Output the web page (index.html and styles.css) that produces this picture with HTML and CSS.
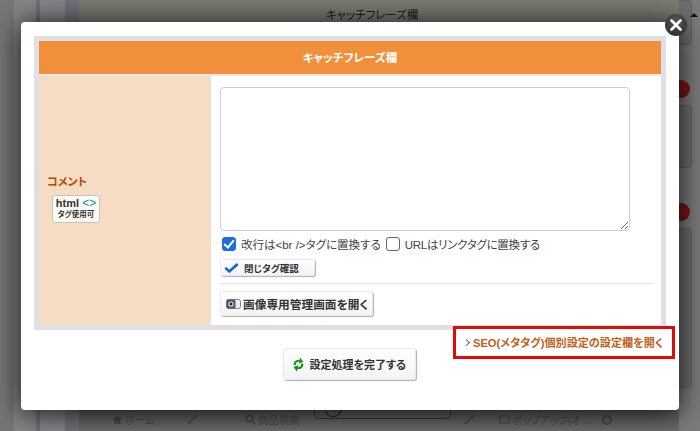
FILE: index.html
```html
<!DOCTYPE html>
<html lang="ja">
  <head>
    <meta charset="UTF-8" />
    <title>キャッチフレーズ欄</title>
    <link rel="stylesheet" href="styles.css">
  </head>
  <body>
    <!-- page behind the overlay -->
    <div class="backdrop">
      <div class="bd-side"></div>
      <div class="bd-main">
        <div class="bd-title">
          <span>キャッチフレーズ欄</span>
          <i class="bd-caret"></i>
        </div>
        <div class="bd-foot">
          <div class="bd-item bd-home">
            <svg width="11" height="10" viewBox="0 0 11 10"><path d="M5.500 1L1 5h1.500v4h2.200V6.500h1.600V9h2.200V5H10z" fill="#444"/></svg>
            <span>ホーム</span>
          </div>
          <svg class="bd-pen" width="11" height="11" viewBox="0 0 11 11"><path d="M1 10L10 1" stroke="#444" stroke-width="1.500"/></svg>
          <div class="bd-item bd-search">
            <svg width="11" height="11" viewBox="0 0 11 11"><circle cx="4.500" cy="4.500" r="3.200" fill="none" stroke="#444" stroke-width="1.300"/><path d="M7 7l3 3" stroke="#444" stroke-width="1.500"/></svg>
            <span>商品検索</span>
          </div>
          <div class="bd-pill"><i></i></div>
          <svg class="bd-pen bd-pen-b" width="11" height="11" viewBox="0 0 11 11"><path d="M1 10L10 1" stroke="#444" stroke-width="1.500"/></svg>
          <div class="bd-item bd-popup">
            <svg width="11" height="9" viewBox="0 0 11 9"><rect x="1" y="1" width="9" height="7" fill="none" stroke="#444"/></svg>
            <span>ポップアップ(オ...</span>
            <i class="bd-gear"></i>
          </div>
        </div>
      </div>
      <div class="bd-right">
        <div class="bd-box bd-box-a"></div>
        <i class="bd-badge"></i>
        <div class="bd-box bd-box-b"></div>
        <i class="bd-badge"></i>
        <div class="bd-box bd-box-c"></div>
      </div>
    </div>

    <div class="modal">
      <a class="close" href="#">
        <svg width="14" height="14" viewBox="0 0 14 14"><path d="M2.500 2.500l9 9M11.500 2.500l-9 9" stroke="#fff" stroke-width="2.600" stroke-linecap="round"/></svg>
      </a>

      <div class="frame">
        <div class="frame-head">キャッチフレーズ欄</div>
        <div class="frame-row">
          <div class="label-cell">
            <div class="label-text">コメント</div>
            <div class="tag-badge">
              <div class="tag-top">html <b>&lt;&gt;</b></div>
              <div class="tag-sub">タグ使用可</div>
            </div>
          </div>
          <div class="field-cell">
            <textarea class="comment"></textarea>
            <div class="checks">
              <label class="check"><input type="checkbox" checked />改行は&lt;br /&gt;タグに置換する</label>
              <label class="check check-url"><input type="checkbox" />URLはリンクタグに置換する</label>
            </div>
            <button class="btn btn-tag">
              <svg width="15" height="11" viewBox="0 0 17 12"><path d="M1.500 6.500l4.500 4L15.500 2" fill="none" stroke="#0b5fd8" stroke-width="2.800"/></svg>
              <span>閉じタグ確認</span>
            </button>
            <div class="sep"></div>
            <button class="btn btn-image">
              <svg width="15" height="10" viewBox="0 0 15 10"><rect x=".5" y=".5" width="14" height="9" rx="2" fill="#eee" stroke="#888"/><rect x=".5" y=".5" width="9" height="9" rx="2" fill="#555"/><circle cx="5" cy="5" r="2.600" fill="#fff"/><circle cx="5" cy="5" r="1.700" fill="#123a80"/></svg>
              <span>画像専用管理画面を開く</span>
            </button>
          </div>
        </div>
      </div>

      <div class="seo-link"><i class="chev"></i>SEO(メタタグ)個別設定の設定欄を開く</div>

      <div class="actions">
        <button class="btn btn-done">
          <svg width="13" height="15" viewBox="0 0 15 17"><path d="M2 9.500C1.500 5.500 4.500 3 8.500 3.500L9.500 .5l3.500 5-5.500 2 .8-2C6 5 4 6.500 4.500 9.500z" fill="#1a9a1a"/><path d="M13 7.500c.5 4-2.500 6.500-6.500 6L5.500 16.500 2 11.500l5.500-2-.8 2C9 12 11 10.500 10.500 7.500z" fill="#0e8a0e"/></svg>
          <span>設定処理を完了する</span>
        </button>
      </div>
    </div>
  </body>
</html>
```

FILE: styles.css
```css
html, body {
  margin: 0;
  height: 431px;
  overflow: hidden;
}
body {
  font-family: "Liberation Sans", "Noto Sans CJK JP", sans-serif;
  font-feature-settings: "palt";
  background: #6f6f6f;
}

/* page behind the overlay */
.backdrop {
  position: absolute;
  inset: 0;
  display: flex;
}
.bd-side {
  width: 79px;
  background: linear-gradient(90deg, #777 0, #777 14px, #868688 14px, #868688 36px, #707076 36px, #707076 40px, #86868c 40px, #86868c 65px, #72727a 65px, #72727a 79px);
}
.bd-main {
  flex: 1;
  display: flex;
  flex-direction: column;
  justify-content: space-between;
  background: #7d7c72;
}
.bd-title {
  height: 22px;
  display: flex;
  justify-content: center;
  padding: 6px 14px 0 0;
  box-sizing: border-box;
  font-size: 11.5px;
  color: #1c1c1c;
  position: relative;
}
.bd-caret {
  position: absolute;
  right: -19px;
  top: 13px;
  border: 4px solid transparent;
  border-top: 0;
  border-bottom: 4px solid #111;
}
.bd-foot {
  height: 21px;
  display: flex;
  align-items: flex-start;
  background: linear-gradient(#5c5c5c, #6e6e6e);
  padding-left: 33px;
  box-sizing: border-box;
  font-size: 10.5px;
  color: #4a4a4a;
}
.bd-item {
  display: flex;
  align-items: center;
  gap: 2px;
  margin-top: 2px;
  white-space: nowrap;
}
.bd-pen {
  margin: 4px 0 0 32px;
}
.bd-pen-b {
  margin-left: 13px;
}
.bd-search {
  margin-left: 47px;
}
.bd-pill {
  width: 137px;
  height: 9px;
  margin-left: 14px;
  box-sizing: border-box;
  border: 1px solid #333;
  border-top: 0;
  border-radius: 0 0 5px 5px;
}
.bd-pill i {
  display: block;
  width: 14px;
  height: 6px;
  margin-left: 10px;
  border: 1.5px solid #222;
  border-top: 0;
  border-radius: 0 0 8px 8px;
}
.bd-popup {
  margin-left: 24px;
}
.bd-gear {
  width: 6px;
  height: 6px;
  margin-left: 10px;
  border: 2px solid #4a4a4a;
  border-radius: 50%;
}
.bd-right {
  width: 21px;
  background: #7c7c7c;
  display: flex;
  flex-direction: column;
}
.bd-box {
  width: 13px;
  box-sizing: border-box;
  background: rgba(0, 0, 0, 0.1);
  border: 1px solid rgba(0, 0, 0, 0.12);
  border-left: 0;
  border-radius: 0 4px 4px 0;
}
.bd-box-a {
  height: 45px;
}
.bd-box-b {
  height: 63px;
  margin-top: 7px;
}
.bd-box-c {
  height: 160px;
  margin-top: 7px;
}
.bd-badge {
  width: 18px;
  height: 18px;
  margin: 35px 0 0 -7px;
  border-radius: 50%;
  background: #7c1616;
}

.modal {
  position: absolute;
  left: 21px;
  top: 22px;
  width: 658px;
  height: 388px;
  box-sizing: border-box;
  padding: 14px 0 0 13px;
  background: #fff;
  border-radius: 4px;
  box-shadow: 0 2px 28px 1px rgba(0, 0, 0, 0.85);
}
.close {
  position: absolute;
  right: -8px;
  top: -8px;
  width: 22px;
  height: 22px;
  border-radius: 50%;
  background: radial-gradient(circle at 50% 30%, #555, #2a2a2a);
  display: flex;
  align-items: center;
  justify-content: center;
}

.frame {
  width: 632px;
  height: 294px;
  box-sizing: border-box;
  border: 5px solid #dfdfe6;
  background: #e6e6ee;
  display: flex;
  flex-direction: column;
  gap: 2px;
}
.frame-head {
  height: 33px;
  line-height: 34px;
  text-align: center;
  background: #f18f3b;
  color: #fff;
  font-size: 11.5px;
  font-weight: bold;
}
.frame-row {
  flex: 1;
  display: flex;
  background: #fff;
}
.label-cell {
  width: 172px;
  box-sizing: border-box;
  background: #f7dcc4;
  padding: 99px 0 0 8px;
}
.label-text {
  color: #b84a00;
  font-size: 11px;
  font-weight: bold;
  line-height: 14px;
}
.tag-badge {
  width: 48px;
  height: 28px;
  box-sizing: border-box;
  margin: 6px 0 0 5px;
  background: #fbfbf2;
  border: 1.5px solid #c4c4c4;
  border-radius: 3px;
  text-align: center;
  color: #333;
}
.tag-top {
  font-size: 11px;
  font-weight: bold;
  line-height: 13px;
  margin-top: 1px;
}
.tag-top b {
  color: #0a87c8;
  font-size: 12px;
  font-weight: normal;
}
.tag-sub {
  font-size: 7.5px;
  line-height: 10px;
  font-weight: bold;
}

.field-cell {
  flex: 1;
  padding: 11px 8px 0 9px;
}
.comment {
  display: block;
  width: 410px;
  height: 144px;
  box-sizing: border-box;
  border: 1px solid #cfcfcf;
  border-radius: 4px;
  outline: none;
  margin: 0;
}
.checks {
  display: flex;
  gap: 5px;
  margin: 5px 0 0 2px;
  height: 15px;
}
.check {
  display: flex;
  align-items: center;
  gap: 5px;
  font-size: 11.5px;
  color: #444;
  white-space: nowrap;
}
.check-url {
  letter-spacing: -0.3px;
}
.check input {
  appearance: none;
  width: 14px;
  height: 14px;
  margin: 0;
  border: 1.5px solid #666;
  border-radius: 3px;
  background: #fff;
  position: relative;
}
.check input:checked {
  background: #1a6fe0;
  border-color: #1a6fe0;
}
.check input:checked::after {
  content: "";
  position: absolute;
  left: 3px;
  top: 0;
  width: 4px;
  height: 8px;
  border: solid #fff;
  border-width: 0 2px 2px 0;
  transform: rotate(40deg);
}

.btn {
  display: flex;
  align-items: center;
  padding: 0;
  box-sizing: border-box;
  border: 1px solid #e8e8e8;
  border-radius: 3px;
  background: linear-gradient(#fff, #f3f3f3);
  box-shadow: 1px 1px 1px #b0b0b0;
  font-family: inherit;
  font-feature-settings: inherit;
  font-weight: bold;
  color: #333;
  white-space: nowrap;
}
.btn-tag {
  width: 95px;
  height: 17px;
  margin-top: 8px;
  padding-left: 3px;
  gap: 5px;
  font-size: 9.5px;
}
.sep {
  height: 1px;
  background: #e6e6e6;
  margin-top: 7px;
}
.btn-image {
  width: 153px;
  height: 25px;
  margin-top: 7px;
  padding-left: 5px;
  gap: 2px;
  font-size: 11.7px;
}

/* red annotation over the frame corner */
.seo-link {
  position: absolute;
  left: 432px;
  top: 304px;
  width: 222px;
  height: 33px;
  box-sizing: border-box;
  border: 3px solid #e00a0a;
  background: #fff;
  display: flex;
  align-items: center;
  gap: 4px;
  padding: 0 0 1px 8px;
  font-size: 11.1px;
  font-weight: bold;
  color: #c0601a;
  white-space: nowrap;
}
.chev {
  width: 4px;
  height: 4px;
  border: solid #666;
  border-width: 1.5px 1.5px 0 0;
  transform: rotate(45deg);
}

.actions {
  display: flex;
  justify-content: center;
  margin-top: 18px;
  padding-right: 15px;
}
.btn-done {
  width: 133px;
  height: 32px;
  padding-left: 8px;
  gap: 5px;
  font-size: 11px;
}
```
